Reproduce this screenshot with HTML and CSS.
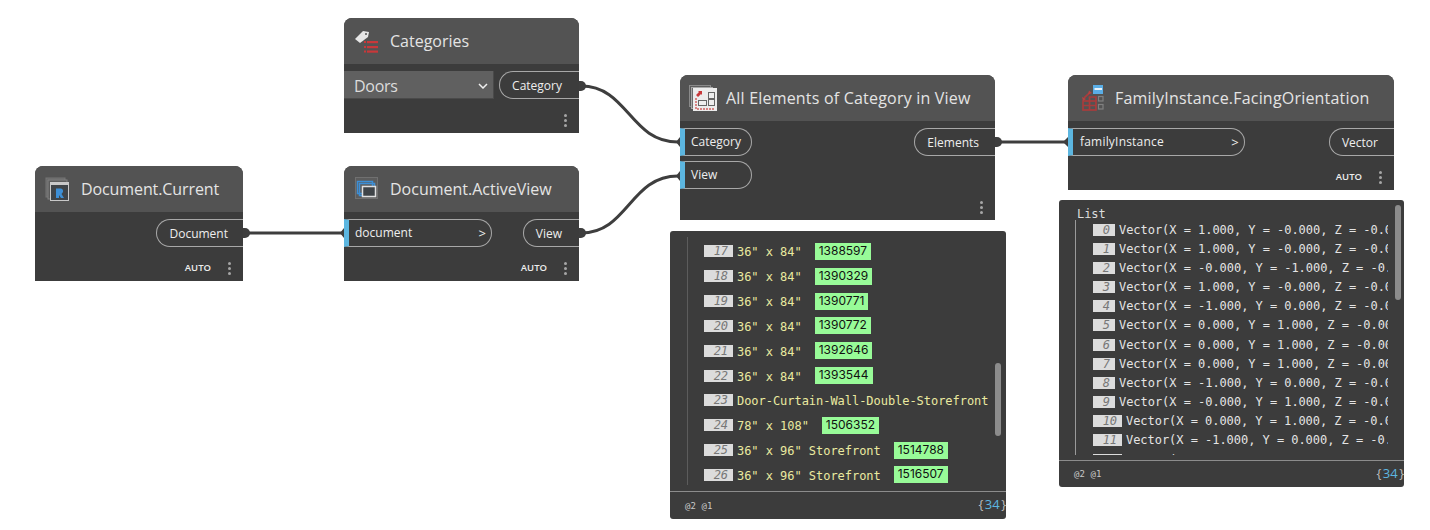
FILE: index.html
```html
<!DOCTYPE html>
<html lang="en">

<head>
    <meta charset="UTF-8">
    <title>Dynamo graph</title>
    <link rel="stylesheet" href="styles.css">
</head>

<body>
    <div class="canvas">
        <!-- wires between the nodes -->
        <svg class="wires" width="1430" height="530" viewBox="0 0 1430 530">
            <g class="wire">
                <path d="M245 233 H342" />
                <path d="M581 86 C628 86 630 142 678 142" />
                <path d="M581 233 C628 233 630 176 678 176" />
                <path d="M997 142 H1066" />
            </g>
            <g class="nub">
                <path d="M243 228 h2 a5 5 0 0 1 0 10 h-2 z" />
                <path d="M579 81 h2 a5 5 0 0 1 0 10 h-2 z" />
                <path d="M579 228 h2 a5 5 0 0 1 0 10 h-2 z" />
                <path d="M995 137 h2 a5 5 0 0 1 0 10 h-2 z" />
                <path d="M344 228 l-4 5 l4 5 z" />
                <path d="M680 137 l-4 5 l4 5 z" />
                <path d="M680 171 l-4 5 l4 5 z" />
                <path d="M1068 137 l-5 5 l5 5 z" />
            </g>
        </svg>

        <div class="node node-current">
            <div class="node-head">
                <svg class="node-icon" width="26" height="26" viewBox="0 0 26 26">
                    <rect x="1" y="2" width="19" height="19" fill="#666" stroke="#777" />
                    <rect x="3" y="4" width="19" height="19" fill="#5c5c5c" stroke="#808080" />
                    <rect x="5.500" y="6.500" width="18" height="18" fill="#3f4448" stroke="#c8c8c8" />
                    <rect x="5" y="6" width="19" height="3" fill="#c8c8c8" />
                    <path d="M11 22 V12.500 H16 Q18.500 13 18 16 L16.500 18 L19 22 H16 L14 19 V22 Z" fill="#3d8fd6" />
                </svg>
                <span class="node-title">Document.Current</span>
            </div>
            <div class="node-body">
                <div class="port-row port-row-end">
                    <div class="port port-out">Document</div>
                </div>
            </div>
            <div class="node-foot">
                <span class="auto">AUTO</span>
                <span class="dots"><i></i><i></i><i></i></span>
            </div>
        </div>

        <div class="node node-categories">
            <div class="node-head">
                <svg class="node-icon" width="26" height="26" viewBox="0 0 26 26">
                    <path d="M1 11 L9 3 L15 4 L14 9 L6 15 Z" fill="#e6e6e6" />
                    <circle cx="12" cy="6" r="1" fill="#535353" />
                    <g fill="#c8383a">
                        <rect x="10" y="13" width="2" height="2" />
                        <rect x="10" y="18" width="2" height="2" />
                        <rect x="10" y="22.500" width="2" height="2" />
                        <rect x="13" y="13" width="11" height="2.200" />
                        <rect x="13" y="18" width="11" height="2.200" />
                        <rect x="13" y="22.500" width="11" height="2.200" />
                    </g>
                </svg>
                <span class="node-title">Categories</span>
            </div>
            <div class="node-body">
                <div class="port-row">
                    <div class="dropdown">
                        <span>Doors</span>
                        <svg width="10" height="6" viewBox="0 0 10 6">
                            <path d="M1 1 L5 5 L9 1" fill="none" stroke="#f0f0f0" stroke-width="1.500" />
                        </svg>
                    </div>
                    <div class="port port-out">Category</div>
                </div>
            </div>
            <div class="node-foot">
                <span class="dots"><i></i><i></i><i></i></span>
            </div>
        </div>

        <div class="node node-active">
            <div class="node-head">
                <svg class="node-icon" width="26" height="26" viewBox="0 0 26 26">
                    <rect x="1.500" y="1.500" width="22" height="21" fill="#5c5c5c" stroke="#707070" />
                    <rect x="3.500" y="5.500" width="15" height="12" fill="none" stroke="#3d8fd6" stroke-width="1.500" />
                    <rect x="5.500" y="7.500" width="15" height="12" fill="none" stroke="#3d8fd6" stroke-width="1.500" />
                    <rect x="8.500" y="10.500" width="13" height="10" fill="#3f4448" stroke="#e0e0e0" stroke-width="1.500" />
                </svg>
                <span class="node-title">Document.ActiveView</span>
            </div>
            <div class="node-body">
                <div class="port-row">
                    <div class="port port-in port-in-wide">
                        <span>document</span><b>&gt;</b>
                    </div>
                    <div class="port port-out">View</div>
                </div>
            </div>
            <div class="node-foot">
                <span class="auto">AUTO</span>
                <span class="dots"><i></i><i></i><i></i></span>
            </div>
        </div>

        <div class="node node-elements">
            <div class="node-head">
                <svg class="node-icon" width="28" height="26" viewBox="0 0 28 26">
                    <rect x="0.500" y="0.500" width="21" height="21" fill="#5c5c5c" stroke="#8a8a8a" />
                    <rect x="2.500" y="2.500" width="21" height="21" fill="#6c6c6c" stroke="#a8a8a8" />
                    <rect x="4" y="3" width="24" height="23" fill="#ececec" />
                    <path d="M7 10 L10 7 L9 6 H13 V10 L12 9 L9 12 Z" fill="#c8383a" />
                    <path d="M7 13 V24 H26" fill="none" stroke="#d06060" stroke-width="1.500" stroke-dasharray="2 1" />
                    <rect x="9.500" y="15.500" width="8" height="5" fill="#eee" stroke="#666" />
                    <rect x="19.500" y="7.500" width="6" height="6" fill="#eee" stroke="#666" />
                    <rect x="19.500" y="14.500" width="6" height="6" fill="#eee" stroke="#666" />
                </svg>
                <span class="node-title">All Elements of Category in View</span>
            </div>
            <div class="node-body node-body-split">
                <div class="port-col">
                    <div class="port port-in">Category</div>
                    <div class="port port-in">View</div>
                </div>
                <div class="port port-out">Elements</div>
            </div>
            <div class="node-foot">
                <span class="dots"><i></i><i></i><i></i></span>
            </div>
        </div>

        <div class="node node-family">
            <div class="node-head">
                <svg class="node-icon" width="26" height="26" viewBox="0 0 26 26">
                    <rect x="15" y="0" width="10" height="9" fill="#5aaee6" />
                    <rect x="16.500" y="3" width="7.500" height="2" fill="#e8f2fa" />
                    <g fill="none" stroke="#a83c3c" stroke-width="1.700">
                        <rect x="5" y="16" width="13" height="9" />
                        <path d="M11.500 16 V25 M5 20.500 H18 M11.500 16 V12 H18 V16" />
                        <path d="M6 13 L12 7.500" />
                    </g>
                    <path d="M11 5.500 L14 8 L10 9.500 Z M4 12 L8 14 L5 16 Z" fill="#b84040" />
                    <g fill="none" stroke="#808080" stroke-width="1.200">
                        <rect x="20.500" y="11.500" width="4.500" height="4.500" />
                        <rect x="20.500" y="19.500" width="4.500" height="4.500" />
                    </g>
                </svg>
                <span class="node-title">FamilyInstance.FacingOrientation</span>
            </div>
            <div class="node-body">
                <div class="port-row">
                    <div class="port port-in port-in-family">
                        <span>familyInstance</span><b>&gt;</b>
                    </div>
                    <div class="port port-out">Vector</div>
                </div>
            </div>
            <div class="node-foot">
                <span class="auto">AUTO</span>
                <span class="dots"><i></i><i></i><i></i></span>
            </div>
        </div>

        <!-- preview bubbles -->
        <div class="watch watch-elements">
            <div class="watch-main">
                <div class="tree tree-elements">
                    <div class="row"><span class="idx">17</span><span class="val">36" x 84"</span><span class="eid">1388597</span></div>
                    <div class="row"><span class="idx">18</span><span class="val">36" x 84"</span><span class="eid">1390329</span></div>
                    <div class="row"><span class="idx">19</span><span class="val">36" x 84"</span><span class="eid">1390771</span></div>
                    <div class="row"><span class="idx">20</span><span class="val">36" x 84"</span><span class="eid">1390772</span></div>
                    <div class="row"><span class="idx">21</span><span class="val">36" x 84"</span><span class="eid">1392646</span></div>
                    <div class="row"><span class="idx">22</span><span class="val">36" x 84"</span><span class="eid">1393544</span></div>
                    <div class="row"><span class="idx">23</span><span class="val">Door-Curtain-Wall-Double-Storefront</span></div>
                    <div class="row"><span class="idx">24</span><span class="val">78" x 108"</span><span class="eid">1506352</span></div>
                    <div class="row"><span class="idx">25</span><span class="val">36" x 96" Storefront</span><span class="eid">1514788</span></div>
                    <div class="row"><span class="idx">26</span><span class="val">36" x 96" Storefront</span><span class="eid">1516507</span></div>
                </div>
                <div class="scroll-thumb"></div>
            </div>
            <div class="watch-foot">
                <span class="levels">@2 @1</span>
                <span class="count">{<em>34</em>}</span>
            </div>
        </div>

        <div class="watch watch-vectors">
            <div class="watch-main">
                <div class="list-label">List</div>
                <div class="tree tree-vectors">
                    <div class="row"><span class="idx">0</span><span class="val">Vector(X = 1.000, Y = -0.000, Z = -0.000)</span></div>
                    <div class="row"><span class="idx">1</span><span class="val">Vector(X = 1.000, Y = -0.000, Z = -0.000)</span></div>
                    <div class="row"><span class="idx">2</span><span class="val">Vector(X = -0.000, Y = -1.000, Z = -0.000)</span></div>
                    <div class="row"><span class="idx">3</span><span class="val">Vector(X = 1.000, Y = -0.000, Z = -0.000)</span></div>
                    <div class="row"><span class="idx">4</span><span class="val">Vector(X = -1.000, Y = 0.000, Z = -0.000)</span></div>
                    <div class="row"><span class="idx">5</span><span class="val">Vector(X = 0.000, Y = 1.000, Z = -0.000)</span></div>
                    <div class="row"><span class="idx">6</span><span class="val">Vector(X = 0.000, Y = 1.000, Z = -0.000)</span></div>
                    <div class="row"><span class="idx">7</span><span class="val">Vector(X = 0.000, Y = 1.000, Z = -0.000)</span></div>
                    <div class="row"><span class="idx">8</span><span class="val">Vector(X = -1.000, Y = 0.000, Z = -0.000)</span></div>
                    <div class="row"><span class="idx">9</span><span class="val">Vector(X = -0.000, Y = 1.000, Z = -0.000)</span></div>
                    <div class="row"><span class="idx">10</span><span class="val">Vector(X = 0.000, Y = 1.000, Z = -0.000)</span></div>
                    <div class="row"><span class="idx">11</span><span class="val">Vector(X = -1.000, Y = 0.000, Z = -0.000)</span></div>
                    <div class="row"><span class="idx">12</span><span class="val">Vector(X = 0.000, Y = 1.000, Z = -0.000)</span></div>
                </div>
                <div class="scroll-thumb"></div>
            </div>
            <div class="watch-foot">
                <span class="levels">@2 @1</span>
                <span class="count">{<em>34</em>}</span>
            </div>
        </div>
    </div>
</body>

</html>
```

FILE: styles.css
```css
body {
    margin: 0;
    background-color: #ffffff;
    font-family: "Open Sans", sans-serif;
}

.canvas {
    position: relative;
    width: 1430px;
    height: 530px;
    overflow: hidden;
}

.wires {
    position: absolute;
    left: 0;
    top: 0;
}

.wire path {
    fill: none;
    stroke: #3e3e3e;
    stroke-width: 3;
}

.nub path {
    fill: #3e3e3e;
}

/* nodes sit on a free canvas */
.node {
    position: absolute;
    display: flex;
    flex-direction: column;
    background-color: #3c3c3c;
    border-radius: 8px 8px 0 0;
    color: #eeeeee;
}

.node-current {
    left: 35px;
    top: 166px;
    width: 208px;
    height: 115px;
}

.node-categories {
    left: 344px;
    top: 18px;
    width: 235px;
    height: 115px;
}

.node-active {
    left: 344px;
    top: 166px;
    width: 235px;
    height: 115px;
}

.node-elements {
    left: 680px;
    top: 75px;
    width: 315px;
    height: 145px;
}

.node-family {
    left: 1068px;
    top: 75px;
    width: 326px;
    height: 115px;
}

.node-head {
    display: flex;
    align-items: center;
    height: 46px;
    padding-left: 10px;
    gap: 10px;
    flex-shrink: 0;
    background-color: #535353;
    border-radius: 8px 8px 0 0;
}

.node-icon {
    flex-shrink: 0;
}

.node-elements .node-head {
    padding-left: 9px;
    gap: 9px;
}

.node-family .node-head {
    gap: 11px;
}

.node-title {
    font-size: 16px;
    color: #e4e4e4;
    white-space: nowrap;
}

.node-current .node-title {
    letter-spacing: -0.100px;
}

.node-elements .node-title,
.node-family .node-title {
    letter-spacing: 0.200px;
}

.node-body {
    padding-top: 7px;
}

.node-body-split {
    display: flex;
    justify-content: space-between;
    align-items: flex-start;
}

.port-row {
    display: flex;
    justify-content: space-between;
    align-items: center;
}

.port-row-end {
    justify-content: flex-end;
}

.port-col {
    display: flex;
    flex-direction: column;
    gap: 5px;
}

.port {
    display: flex;
    align-items: center;
    box-sizing: border-box;
    height: 28px;
    font-size: 12px;
    border: 1px solid #a8a8a8;
}

.port-out {
    padding: 0 15px 0 12px;
    border-right: none;
    border-radius: 14px 0 0 14px;
}

.node-categories .port-out,
.node-active .port-out {
    padding-right: 17px;
}

.node-elements .port-out,
.node-family .port-out {
    padding-right: 16px;
}

.port-in {
    justify-content: space-between;
    width: 72px;
    padding: 0 10px 1px 6px;
    border-left: 5px solid #5cb6e0;
    border-radius: 0 14px 14px 0;
}

.port-in b {
    font-weight: 400;
    font-size: 13px;
    margin-top: 1px;
}

.port-in-wide {
    width: 148px;
    padding-right: 5px;
}

.port-in-family {
    width: 177px;
    padding-left: 7px;
    padding-right: 5px;
    letter-spacing: 0.200px;
}

.dropdown {
    display: flex;
    align-items: center;
    justify-content: space-between;
    box-sizing: border-box;
    width: 150px;
    height: 28px;
    padding: 2px 5px 0 10px;
    background-color: #606060;
    border-right: 1px solid #4a4a4a;
    border-bottom: 1px solid #4a4a4a;
    font-size: 16px;
    letter-spacing: -0.300px;
    color: #dcdcdc;
}

.node-foot {
    display: flex;
    align-items: center;
    justify-content: flex-end;
    height: 26px;
    margin-top: auto;
    padding-right: 12px;
    gap: 17px;
}

.auto {
    margin-bottom: 2px;
    font-size: 9.500px;
    font-weight: 600;
    color: #eeeeee;
}

.dots {
    display: flex;
    flex-direction: column;
    gap: 2px;
}

.dots i {
    display: block;
    width: 3px;
    height: 3px;
    border-radius: 50%;
    background-color: #a6a6a6;
}

/* watch bubbles */
.watch {
    position: absolute;
    display: flex;
    flex-direction: column;
    box-sizing: border-box;
    background-color: #3c3c3c;
    border-radius: 3px;
    font-family: "DejaVu Sans Mono", monospace;
    font-size: 12px;
    letter-spacing: -0.040px;
}

.watch-elements {
    left: 670px;
    top: 231px;
    width: 336px;
    height: 288px;
}

.watch-vectors {
    left: 1059px;
    top: 200px;
    width: 345px;
    height: 287px;
}

.watch-main {
    position: relative;
    flex: 1;
    min-height: 0;
}

.watch-foot {
    display: flex;
    align-items: center;
    justify-content: space-between;
    box-sizing: border-box;
    height: 28px;
    padding-left: 15px;
    border-top: 1px solid #8c8c8c;
}

.watch-vectors .watch-foot {
    height: 27px;
}

.levels {
    font-size: 9px;
    letter-spacing: 0.100px;
    color: #c8c8c8;
}

.count {
    margin-bottom: 3px;
    font-family: "Open Sans", sans-serif;
    font-size: 13px;
    letter-spacing: 0;
    color: #bbbbbb;
}

.count em {
    margin: 0 1.500px;
    font-style: normal;
    color: #5cb6e0;
}

.tree {
    overflow: hidden;
    box-sizing: border-box;
    border-left: 1px solid #5c5c5c;
    white-space: nowrap;
}

.tree-elements {
    margin: 6px 0 0 17px;
    height: 248px;
    padding-top: 2px;
    padding-left: 16px;
    color: #eaeaa0;
}

.tree-vectors {
    margin: 0 0 0 16px;
    width: 313px;
    height: 235px;
    padding-left: 17px;
    border-left-color: #9a9a9a;
    color: #e4e4e4;
}

.list-label {
    height: 20px;
    padding: 7px 0 0 18px;
    box-sizing: border-box;
    line-height: 14px;
    color: #dddddd;
}

.row {
    display: flex;
    align-items: center;
}

.tree-elements .row {
    height: 24.830px;
}

.tree-vectors .row {
    height: 19.180px;
}

.idx {
    flex-shrink: 0;
    box-sizing: border-box;
    width: 22px;
    height: 12px;
    margin-right: 4px;
    padding-right: 5px;
    background-color: #dcdcdc;
    color: #777777;
    font-style: italic;
    line-height: 12px;
    text-align: right;
}

.tree-elements .idx,
.tree-vectors .row:nth-child(n+11) .idx {
    width: 29px;
}

.tree-elements .val {
    margin-top: 2px;
}

.eid {
    margin-left: 13px;
    padding: 0 4px;
    height: 17px;
    line-height: 16px;
    background-color: #98fb98;
    color: #111111;
    font-family: Inter, sans-serif;
    font-size: 12px;
    letter-spacing: 0;
}

.scroll-thumb {
    position: absolute;
    width: 6px;
    border-radius: 3px;
    background-color: #8c8c8c;
}

.watch-elements .scroll-thumb {
    left: 325px;
    top: 132px;
    height: 73px;
}

.watch-vectors .scroll-thumb {
    left: 336px;
    top: 5px;
    height: 95px;
}
```
